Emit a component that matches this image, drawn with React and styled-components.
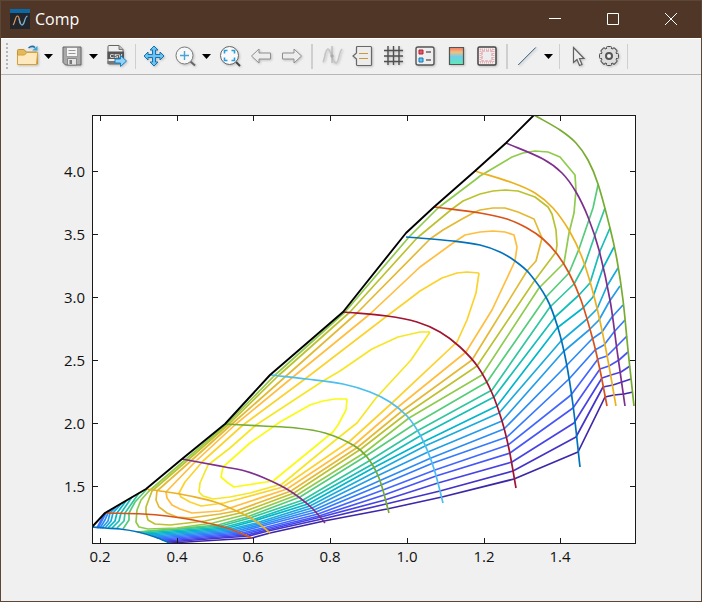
import React from 'react'
import styled, { createGlobalStyle } from 'styled-components'

const Global = createGlobalStyle`
   * { box-sizing: border-box; }
   body {
      margin: 0;
      background: #f0f0f0;
      font-family: 'Open Sans', 'Noto Sans', sans-serif;
   }
`

/* contour levels, low to high */
const levels = [
   ['#3e26a8', '170,543 252,538 270,533 324,521 387,509 442,497 514,479 578,452 605,397 614,395 624,394 633,392'],
   ['#4433c6', '167,542 249,536 268,531 322,519 386,504 440,491 513,471 576,437 603,387 613,385 622,382 631,379'],
   ['#4743e3', '165,541 247,535 267,530 321,517 385,500 438,483 512,462 574,423 602,378 611,375 621,372 630,366'],
   ['#4755f6', '162,540 244,534 265,529 319,516 384,495 436,476 510,453 573,408 600,369 609,366 619,360 628,352'],
   ['#4367fd', '160,539 242,533 263,528 318,514 383,490 435,470 508,445 571,395 598,359 607,356 617,346 627,336', '105,513 97,528'],
   ['#347afd', '157,538 239,532 262,526 316,512 381,485 433,463 507,437 569,379 595,350 604,345 614,332 625,320', '108,511 106,513 98,528'],
   ['#2d8cf3', '155,537 236,531 260,525 314,510 379,481 431,458 504,429 566,366 592,339 602,332 612,317 623,305', '112,509 108,513 105,520 100,528'],
   ['#259ce7', '152,536 233,530 258,524 312,508 377,476 428,452 502,421 563,352 589,330 599,320 609,302 620,286', '116,507 110,513 108,521 102,528'],
   ['#1aaadc', '149,535 231,529 256,523 310,506 375,472 425,446 499,413 561,341 587,319 597,309 607,286 618,268', '121,504 113,513 111,521 105,528'],
   ['#01b5cb', '146,534 228,528 254,521 308,504 373,468 423,442 497,406 557,328 583,308 593,297 603,268 614,247', '126,501 117,513 115,521 108,528'],
   ['#15beb6', '143,533 225,527 252,520 305,502 371,465 420,436 494,397 555,317 579,295 590,283 600,251 610,228', '132,497 121,513 119,521 112,528'],
   ['#31c69f', '140,532 221,526 250,518 303,500 369,461 417,431 492,390 550,307 574,284 585,264 595,235 605,208', '139,493 125,513 124,521 117,528'],
   ['#55cc7a', '137,532 218,525 247,517 300,497 366,456 413,425 487,382 546,297 569,273 579,249 593,208 598,185', '147,489 135,502 129,513 129,520 123,529'],
   ['#8fcb4c', '475,180 438,208 409,237 345,312 274,376 227,424 185,460 149,491 141,500 137,510 136,522 139,527 148,529 177,528 213,523 244,515 297,495 364,453 409,418 482,375 539,288 564,263 569,233 574,213 576,190 575,175 560,157 548,152 535,151 523,153 512,157 480,176 475,180'],
   ['#bcc22f', '480,194 463,201 452,209 417,238 350,312 278,376 229,424 188,460 152,491 146,507 146,513 148,520 155,524 170,525 205,521 240,513 294,493 361,449 406,414 477,366 535,280 556,252 557,245 556,230 552,214 548,207 535,197 518,191 505,190 493,191 480,194'],
   ['#e3b935', '480,210 475,212 462,219 443,230 430,239 357,313 285,377 232,424 192,460 157,491 156,500 159,507 167,513 177,517 190,518 220,514 236,511 291,491 358,447 402,411 472,360 527,271 536,261 542,238 534,219 518,212 505,208 493,208 480,210'],
   ['#ffbe3f', '480,232 465,235 453,243 420,267 370,314 293,377 236,424 196,461 166,492 167,498 172,505 180,509 192,513 220,511 230,508 287,489 355,444 398,407 466,352 492,310 515,261 517,247 514,235 505,232 493,231 480,232'],
   ['#fbd32e', '479,273 467,272 457,273 442,278 420,291 407,301 387,316 305,379 243,425 203,461 185,482 179,493 181,497 190,502 201,506 224,503 283,487 350,441 392,403 457,342 467,320 476,293 479,273'],
   ['#f5e727', '430,332 420,332 398,337 372,349 340,371 323,381 256,425 230,448 208,465 200,483 199,492 203,496 213,499 230,497 250,493 282,484 338,438 357,423 376,398 411,360 430,332'],
   ['#f9fb15', '347,399 335,399 323,401 310,405 280,422 250,443 223,467 221,477 228,483 234,487 273,481 333,432 338,425 346,410 347,399'],
]

const speedLines = [
   ['#0072bd', '92,527 105,528 120,529 138,532 155,537 170,543'],
   ['#d95319', '105,513 143,514 167,516 193,520 227,528 252,538'],
   ['#edb120', '146,489 167,492 190,496 215,502 243,514 257,522 270,533'],
   ['#7e2f8e', '182,459 225,467 245,471 262,477 285,488 300,498 313,509 325,523'],
   ['#77ac30', '225,424 262,426 296,428 325,433 353,445 367,457 379,478 389,513'],
   ['#4dbeee', '271,375 307,379 343,384 370,392 390,402 407,416 419,433 428,452 435,472 443,503'],
   ['#a2142f', '343,312 387,316 417,322 440,332 460,347 478,367 492,393 502,421 509,449 516,488'],
   ['#0072bd', '406,237 453,241 480,245 500,252 515,261 529,273 547,299 558,328 566,361 573,405 580,467'],
   ['#d95319', '434,207 480,213 507,219 527,228 543,239 557,254 569,273 581,300 593,340 600,370 607,406'],
   ['#edb120', '475,171 513,183 535,193 553,208 570,232 583,260 595,300 606,350 616,406'],
   ['#7e2f8e', '506,143 543,159 562,173 576,192 588,217 599,250 610,300 617,350 625,406'],
   ['#77ac30', '534,115 560,130 576,143 588,160 598,184 610,228 617,260 623,300 628,350 634,406'],
]

const surge = '92,527 105,513 146,489 182,459 225,424 270,375 343,312 406,233 434,207 475,171 506,143 534,115'

const xTicks = [[100, '0.2'], [177, '0.4'], [253, '0.6'], [330, '0.8'], [407, '1.0'], [484, '1.2'], [560, '1.4']]
const yTicks = [[171, '4.0'], [234, '3.5'], [297, '3.0'], [360, '2.5'], [423, '2.0'], [486, '1.5']]

// smooth curve through the given points, handles scaled to each segment
function smooth(str) {
   const p = str.split(' ').map(s => s.split(',').map(Number))
   const dir = p.map((_, i) => {
      const a = p[i - 1] || p[i]
      const b = p[i + 1] || p[i]
      const len = Math.hypot(b[0] - a[0], b[1] - a[1])
      return [(b[0] - a[0]) / len, (b[1] - a[1]) / len]
   })
   let d = `M${p[0]}`
   for (let i = 0; i < p.length - 1; i++) {
      const [x1, y1] = p[i]
      const [x2, y2] = p[i + 1]
      const h = Math.hypot(x2 - x1, y2 - y1) / 3
      d += `C${x1 + dir[i][0] * h},${y1 + dir[i][1] * h} ${x2 - dir[i + 1][0] * h},${y2 - dir[i + 1][1] * h} ${x2},${y2}`
   }
   return d
}

function Chart() {
   return (
      <Plot viewBox="1 75 700 526" role="img" aria-label="Compressor map">
         <clipPath id="area"><rect x="92" y="115" width="543" height="429" /></clipPath>
         <rect x="92" y="115" width="543" height="428" fill="#fff" />
         <g fill="none" strokeWidth="1.7" strokeLinejoin="round" clipPath="url(#area)">
            {levels.map(([color, ...lines]) =>
               lines.map(line => <polyline key={line} points={line} stroke={color} />)
            )}
            {speedLines.map(([color, line]) => <path key={line} d={smooth(line)} stroke={color} />)}
            <polyline points={surge} stroke="#000" strokeWidth="1.9" />
         </g>
         <g stroke="#1a1a1a" fill="none" shapeRendering="crispEdges">
            <rect x="92.5" y="115.5" width="543" height="428" />
            {xTicks.map(([x]) => <path key={x} d={`M${x + 0.5} 543v-5M${x + 0.5} 116v5`} />)}
            {yTicks.map(([y]) => <path key={y} d={`M93 ${y + 0.5}h5M635 ${y + 0.5}h-5`} />)}
         </g>
         {xTicks.map(([x, t]) => <Label key={t} x={x} y="562" textAnchor="middle">{t}</Label>)}
         {yTicks.map(([y, t]) => <Label key={t} x="85" y={y + 6} textAnchor="end">{t}</Label>)}
      </Plot>
   )
}

const gearTeeth = Array.from({ length: 8 }, (_, i) => i * 45)

const icons = {
   open: <>
      <path d="M2.500 6.500q0-1 1-1h5.500l2 2.500h10.500q1 0 1 1V20H3.500q-1 0-1-1z" fill="#e3b95a" stroke="#c59331" />
      <path d="M2.500 20.500V12q0-1 1-1h6l2.500-2.500h9.500q1 0 1 1L21.500 20.500z" fill="#fde9bd" stroke="#d3a13c" />
      <path d="M13.500 4q3.500-3 6.500-.500" fill="none" stroke="#1b6fa8" strokeWidth="1.500" />
      <path d="M22.500 2v4.500H17z" fill="#35a8e0" />
   </>,
   save: <>
      <path d="M3 3h18v18H5.500L3 18.500z" fill="#a9a9a9" stroke="#666" strokeLinejoin="round" />
      <path d="M6.500 3.500h11v9h-11z" fill="#f4f4f4" stroke="#808080" strokeWidth=".6" />
      <path d="M8.500 6.500h7M8.500 9.500h7" stroke="#999" />
      <path d="M7.500 14.500h9V21h-9z" fill="#e4e4e4" stroke="#777" strokeWidth=".8" />
      <path d="M9.500 16h2.500v4H9.500z" fill="#777" />
   </>,
   csv: <>
      <path d="M3 2.500q0-1 1-1h10l4 4V20H4q-1 0-1-1z" fill="#efefef" stroke="#666" />
      <path d="M14 1.500v4h4" fill="#bbb" stroke="#777" />
      <path d="M2.500 7.500H19V15H2.500z" fill="#555" />
      <text x="11" y="13.500" fontSize="6" fontWeight="700" textAnchor="middle" fill="#eee">CSV</text>
      <path d="M2.500 17H16v3H2.500z" fill="#777" />
      <path d="M10 15h5.500v-3.500l6 5.500-6 5.500V19H10z" fill="#8fd3f8" stroke="#1b80c4" />
   </>,
   pan: <path d="M12 2l4 4h-2.500v4.500H18V8l4 4-4 4v-2.500h-4.500V18H16l-4 4-4-4h2.500v-4.500H6V16l-4-4 4-4v2.500h4.500V6H8z" fill="#6cc2f0" stroke="#1872b0" />,
   zoom: <>
      <path d="M17.500 17.500l4.500 4" stroke="#666" strokeWidth="2" />
      <circle cx="11.500" cy="11.500" r="8.500" fill="#f7f7f7" stroke="#7a7a7a" />
      <path d="M11.500 7v9M7 11.500h9" stroke="#4aa3d6" strokeWidth="1.400" />
   </>,
   fit: <>
      <path d="M18 18l4 4" stroke="#444" strokeWidth="2" />
      <circle cx="11.500" cy="11.500" r="9" fill="#fafafa" stroke="#666" />
      <path d="M9.500 6.500h-3v3M13.500 6.500h3v3M9.500 16.500h-3v-3M13.500 16.500h3v-3" fill="none" stroke="#2a9fe0" strokeWidth="1.600" />
   </>,
   back: <path d="M2.500 12L10 5v4h11.500v6H10v4z" fill="#ededed" stroke="#8e8e8e" />,
   forward: <path d="M21.500 12L14 5v4H2.500v6H14v4z" fill="#ededed" stroke="#8e8e8e" />,
   brush: <>
      <path d="M3 18C5 15 5 5 8 5s4 14 8 14c3 0 3-12 6-14" fill="none" stroke="#c4c4c4" strokeWidth="1.500" />
      <path d="M12 2v17" stroke="#aaa" />
      <path d="M10 12l2-2 2 2-2 2z" fill="#aaa" />
   </>,
   tip: <>
      <path d="M5.500 3.500q0-1 1-1h13q1 0 1 1v17q0 1-1 1h-13q-1 0-1-1V15L2 12l3.500-3z" fill="#ececec" stroke="#686868" strokeWidth="1.200" />
      <path d="M8 9.500h9M8 14.500h9" stroke="#c89a3c" />
   </>,
   grid: <path d="M6 2v19M11.500 2v19M17 2v19M2 6.500h19M2 12h19M2 17.500h19" stroke="#505050" strokeWidth="1.400" />,
   legend: <>
      <rect x="3" y="3" width="18" height="18" rx="2" fill="#eee" stroke="#555" strokeWidth="1.400" />
      <path d="M6 6h4v4H6z" fill="#d75c68" stroke="#b72335" />
      <path d="M6 14h4v4H6z" fill="#65c0ed" stroke="#1279b8" />
      <path d="M13 8h5M13 16h5" stroke="#666" strokeWidth="1.300" />
   </>,
   colorbar: <>
      <linearGradient id="cb" x2="0" y2="1">
         <stop offset="0" stopColor="#f47863" />
         <stop offset=".28" stopColor="#f2c07f" />
         <stop offset=".55" stopColor="#68d0ed" />
         <stop offset="1" stopColor="#63e8b0" />
      </linearGradient>
      <path d="M5.500 3.500h14v17h-14z" fill="url(#cb)" stroke="#555" strokeWidth="1.200" />
   </>,
   region: <>
      <rect x="3" y="3" width="18" height="18" rx="1.500" fill="#efefef" stroke="#444" strokeWidth="1.500" />
      <path d="M5 5.500h14M5 18.500h14M5.500 5v14M18.500 5v14" stroke="#e8b0b5" strokeWidth="2" strokeDasharray="1 1" />
      <path d="M7 7h10v10H7z" fill="#ededed" stroke="#dd949b" strokeDasharray="3 1" />
   </>,
   line: <>
      <path d="M3.500 21L21 3.500" stroke="#999" />
      <path d="M3 21L20.500 3.500" stroke="#2a6f9f" strokeWidth=".8" />
   </>,
   pointer: <path d="M7.500 3.500v15l3.500-3 2.500 6 2.500-1-2.500-6h4.500z" fill="#eee" stroke="#626262" strokeWidth="1.200" />,
   gear: <>
      {gearTeeth.map(a => (
         <rect key={a} x="9.500" y="2.500" width="5" height="5" rx="1" fill="#d8d8d8" stroke="#505050" transform={`rotate(${a} 12 12)`} />
      ))}
      <circle cx="12" cy="12" r="7.500" fill="#dedede" />
      <circle cx="12" cy="12" r="3" fill="#f4f4f4" stroke="#555" strokeWidth="2" />
   </>,
}

function Tool({ icon, label }) {
   return (
      <ToolButton aria-label={label}>
         <Icon viewBox="0 0 24 24">{icons[icon]}</Icon>
      </ToolButton>
   )
}

function Caret({ label }) {
   return (
      <CaretButton aria-label={label}>
         <svg width="9" height="5" viewBox="0 0 9 5"><path d="M0 0h9L4.500 5z" /></svg>
      </CaretButton>
   )
}

export default function App() {
   return (
      <Window>
         <Global />
         <TitleBar>
            <Logo viewBox="0 0 20 20">
               <path d="M0 0h20v20H0z" fill="#22262b" />
               <path d="M0 0h20v4H0z" fill="#0b69a8" />
               <path d="M3 16C5 15 5 7 7.500 7c2 0 2 6 3 8" fill="none" stroke="#e39a5b" strokeWidth="1.200" />
               <path d="M9 10c1 4 1.500 6 3 6 3 0 2-8 5.500-9" fill="none" stroke="#7cb6d9" strokeWidth="1.200" />
            </Logo>
            <Title>Comp</Title>
            <Control aria-label="Minimize">
               <svg width="12" height="12"><path d="M0 5.500h12" /></svg>
            </Control>
            <Control aria-label="Maximize">
               <svg width="12" height="12"><path d="M.5.5h11v11H.5z" /></svg>
            </Control>
            <Control aria-label="Close">
               <svg width="12" height="12"><path d="M0 0l12 12M12 0L0 12" /></svg>
            </Control>
         </TitleBar>
         <Toolbar>
            <Handle />
            <Split>
               <Tool icon="open" label="Open" />
               <Caret label="Open options" />
            </Split>
            <Split>
               <Tool icon="save" label="Save" />
               <Caret label="Save options" />
            </Split>
            <Tool icon="csv" label="Export CSV" />
            <Separator />
            <Tool icon="pan" label="Pan" />
            <Split>
               <Tool icon="zoom" label="Zoom" />
               <Caret label="Zoom options" />
            </Split>
            <Tool icon="fit" label="Fit" />
            <Tool icon="back" label="Back" />
            <Tool icon="forward" label="Forward" />
            <Separator $wide />
            <Tool icon="brush" label="Data cursor" />
            <Tool icon="tip" label="Annotation" />
            <Tool icon="grid" label="Grid" />
            <Tool icon="legend" label="Legend" />
            <Tool icon="colorbar" label="Colorbar" />
            <Tool icon="region" label="Region" />
            <Separator $wide />
            <Split>
               <Tool icon="line" label="Line" />
               <Caret label="Line options" />
            </Split>
            <Separator />
            <Tool icon="pointer" label="Select" />
            <Tool icon="gear" label="Settings" />
            <Separator />
         </Toolbar>
         <Chart />
      </Window>
   )
}

const Window = styled.main`
   min-height: 100vh;
   display: flex;
   flex-direction: column;
   border: 1px solid #5c4636;
   background: #f0f0f0;
`

const TitleBar = styled.header`
   height: 37px;
   display: flex;
   align-items: center;
   padding: 0 1px 2px 9px;
   background: #503626;
   color: #fff;
`

const Logo = styled.svg`
   width: 20px;
   height: 20px;
`

const Title = styled.h1`
   flex: 1;
   margin: 0 0 0 5px;
   font-size: 16px;
   font-weight: 400;
   line-height: 20px;
`

const Control = styled.button`
   width: 58px;
   height: 35px;
   display: grid;
   place-items: center;
   padding: 0;
   border: 0;
   background: none;

   svg {
      fill: none;
      stroke: #fff;
   }
`

const Toolbar = styled.div`
   height: 37px;
   display: flex;
   align-items: center;
   gap: 3px;
   padding: 0 0 1px 5px;
   border-top: 1px solid #fff;
   border-bottom: 1px solid #b7b7b7;
`

const Handle = styled.div`
   width: 2px;
   height: 27px;
   margin-right: 2px;
   background: repeating-linear-gradient(#b5b5b5 0 2px, #f0f0f0 2px 4px);
`

const Split = styled.div`
   display: flex;
`

const ToolButton = styled.button`
   width: 28px;
   height: 28px;
   display: grid;
   place-items: center;
   padding: 0;
   border: 0;
   background: none;
`

const Icon = styled.svg`
   width: 24px;
   height: 24px;
   filter: drop-shadow(1px 1px 1px #0003);
`

const CaretButton = styled(ToolButton)`
   width: 14px;
`

const Separator = styled.div`
   width: ${({ $wide }) => $wide ? '2px' : '1px'};
   height: 25px;
   margin: 0 ${({ $wide }) => $wide ? '2px' : '1px'};
   background: #cfcfcf;
`

const Plot = styled.svg`
   display: block;
   width: 100%;
`

const Label = styled.text`
   font-size: 15px;
   fill: #111;
`
